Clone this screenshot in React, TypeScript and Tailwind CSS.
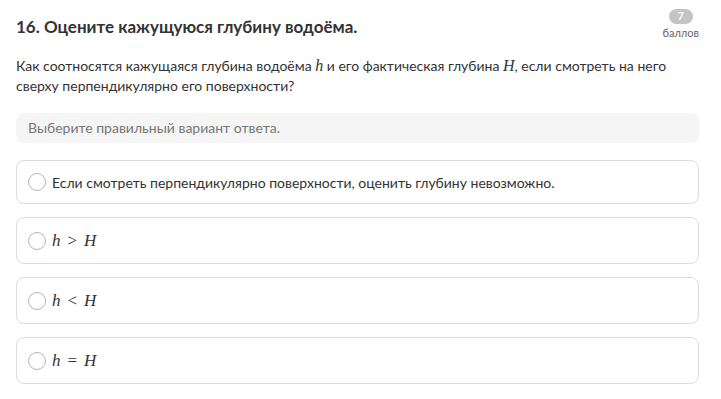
import React from 'react';

const OPTIONS: { id: string; text?: string; math?: [string, string, string] }[] = [
  { id: 'a', text: 'Если смотреть перпендикулярно поверхности, оценить глубину невозможно.' },
  { id: 'b', math: ['h', '>', 'H'] },
  { id: 'c', math: ['h', '<', 'H'] },
  { id: 'd', math: ['h', '=', 'H'] },
];

function M({ children }: { children: React.ReactNode }) {
  return (
    <span className="inline-block align-baseline font-['Liberation_Serif',serif] text-[16px] leading-4 italic">
      {children}
    </span>
  );
}

export default function App() {
  return (
    <div className="min-h-[399px] bg-white pl-4 pr-[22px] pt-[13px] font-['Lato',sans-serif] text-[#333]">
      <div className="flex items-start justify-between">
        <h1 className="mt-[2px] text-[17px] font-bold leading-6">16. Оцените кажущуюся глубину водоёма.</h1>
        <div className="-mt-[4px] flex flex-col items-center">
          <span className="flex h-[15px] w-6 items-center justify-center rounded-full bg-[#c4c4c4] text-[11px] font-bold text-white">
            7
          </span>
          <span className="mt-[3px] text-[11px] leading-3 text-[#666]">баллов</span>
        </div>
      </div>

      <p className="mt-[17px] text-[14px] leading-5">
        Как соотносятся кажущаяся глубина водоёма <M>h</M> и его фактическая глубина <M>H</M>, если смотреть на него
        сверху перпендикулярно его поверхности?
      </p>

      <div className="mt-[17px] rounded-lg bg-[#f5f5f5] px-3 py-[6px] text-[14px] leading-[18px] text-[#777]">
        Выберите правильный вариант ответа.
      </div>

      <div className="mt-[17px] flex flex-col gap-[13px]">
        {OPTIONS.map((o) => (
          <label
            key={o.id}
            className={`flex items-center gap-[6px] rounded-lg border border-[#dcdcdc] pl-[11px] pr-3 ${o.math ? 'h-[47px]' : 'h-[44px]'}`}
          >
            <span className="h-[18px] w-[18px] shrink-0 rounded-full border border-[#b5b5b5] bg-white" />
            {o.text ? (
              <span className="text-[14px]">{o.text}</span>
            ) : (
              <span className="flex items-center gap-[7px] font-['Liberation_Serif',serif] text-[17px]">
                <span className="italic">{o.math![0]}</span>
                <span>{o.math![1]}</span>
                <span className="italic">{o.math![2]}</span>
              </span>
            )}
          </label>
        ))}
      </div>
    </div>
  );
}
